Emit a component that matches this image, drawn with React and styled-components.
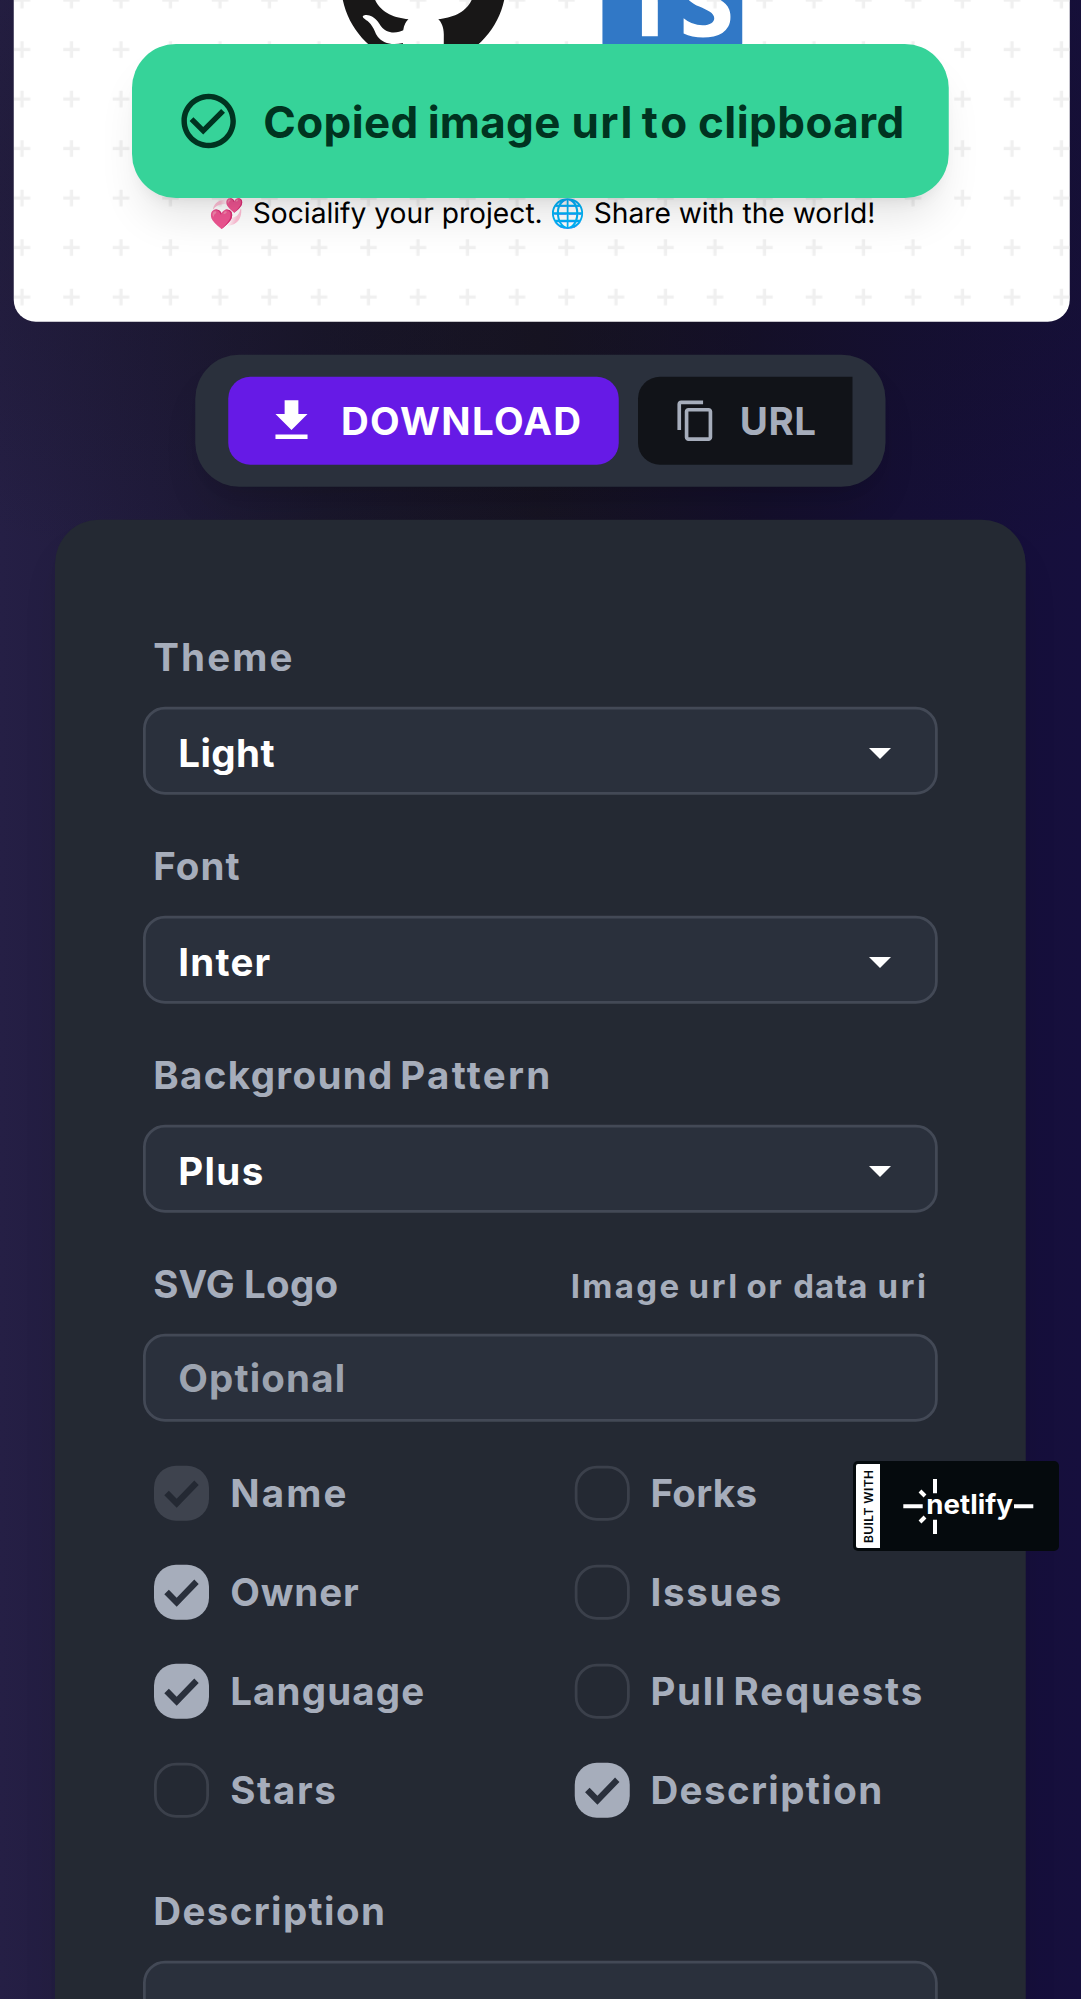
import React from 'react';
import styled, { createGlobalStyle } from 'styled-components';
import { SiGithub, SiTypescript } from 'react-icons/si';
import { MdDownload, MdContentCopy, MdCheckCircleOutline } from 'react-icons/md';

const GlobalStyle = createGlobalStyle`
  *, *::before, *::after { box-sizing: border-box; }
  html, body { margin: 0; padding: 0; }
  body {
    overflow: hidden;
    background: #17132a;
    font-family: Inter, 'Liberation Sans', sans-serif;
    color: #a6adbb;
  }
`;

const shadow = '0 10px 15px -3px rgba(0, 0, 0, 0.1), 0 4px 6px -4px rgba(0, 0, 0, 0.1)';

const Page = styled.div`
  position: relative;
  width: 1081px;
  height: 1999px;
  overflow: hidden;
  background:
    radial-gradient(ellipse 900px 420px at 540px 200px, rgba(20, 17, 28, 0.5), rgba(20, 17, 28, 0)),
    linear-gradient(90deg, #251f45 0%, #201b3c 14%, #1a172e 30%, #171424 50%, #140f2d 70%, #150f37 84%, #160f3d 100%);
`;

/* Phone-sized layout, enlarged to the pixel density of the device. */
const Screen = styled.main`
  display: flex;
  flex-direction: column;
  align-items: center;
  width: 393px;
  height: 727px;
  transform: scale(2.75);
  transform-origin: 0 0;
`;

const Preview = styled.section`
  position: relative;
  display: flex;
  flex: none;
  flex-direction: column;
  align-items: center;
  width: 384px;
  height: 192px;
  margin: -75px 0 12px 1px;
  padding-top: 37.6px;
  border-radius: 8px;
  overflow: hidden;
  background: #fff;
`;

const PatternLayer = styled.svg`
  position: absolute;
  inset: 0;
  width: 100%;
  height: 100%;
`;

const Logos = styled.div`
  position: relative;
  display: flex;
  align-items: center;
  gap: 34.7px;
  height: 60px;
  margin-left: 0.6px;
`;

const Caption = styled.p`
  position: relative;
  margin: 49.9px 0 0 0.6px;
  font-size: 10.25px;
  line-height: 13px;
  color: #000;
  white-space: nowrap;
  text-rendering: geometricPrecision;
`;

const Word = styled.span`
  margin-left: ${(p) => p.$shift}px;
  letter-spacing: ${(p) => p.$track}px;
`;

const Toast = styled.div`
  position: absolute;
  top: 16px;
  left: 48px;
  display: flex;
  align-items: center;
  gap: 8px;
  width: 297px;
  height: 56px;
  padding: 0 16px;
  border-radius: 16px;
  background: #36d399;
  color: #003320;
  font-size: 16px;
  font-weight: 700;
  white-space: nowrap;
  box-shadow: ${shadow};
`;

const Actions = styled.div`
  display: flex;
  flex: none;
  gap: 7px;
  width: 251px;
  height: 48px;
  margin-bottom: 12px;
  padding: 8px 12px;
  border-radius: 16px;
  background: #2a303c;
  box-shadow: ${shadow};
`;

const ActionButton = styled.button`
  display: flex;
  align-items: center;
  gap: 8px;
  width: ${(p) => p.$width}px;
  height: 32px;
  padding: 0 0 0 13px;
  border: 0;
  border-radius: ${(p) => (p.$joined ? '8px 0 0 8px' : '8px')};
  background: ${(p) => (p.$primary ? '#661ae6' : '#111318')};
  color: ${(p) => (p.$primary ? '#fff' : '#a6adbb')};
  font: 700 14px/1 Inter, 'Liberation Sans', sans-serif;
  white-space: nowrap;
`;

const Panel = styled.form`
  display: flex;
  flex: none;
  flex-direction: column;
  gap: 8px;
  width: 353px;
  height: 600px;
  padding: 32px 32px 0;
  border-radius: 16px;
  background: #242933;
  box-shadow: ${shadow};
`;

const Field = styled.div`
  display: flex;
  flex-direction: column;
`;

const LabelRow = styled.div`
  display: flex;
  align-items: center;
  justify-content: space-between;
  height: 36px;
  padding: 0 4px;
`;

const Label = styled.label`
  margin-left: -0.3px;
  font-size: 14px;
  font-weight: 700;
  line-height: 20px;
  white-space: nowrap;
`;

const Hint = styled.span`
  margin-right: -0.7px;
  padding-top: 1px;
  font-size: 12px;
  font-weight: 700;
  line-height: 16px;
  white-space: nowrap;
`;

const Control = styled.div`
  display: flex;
  align-items: center;
  justify-content: space-between;
  flex: none;
  height: ${(p) => (p.$tall ? 96 : 32)}px;
  padding: ${(p) => (p.$select ? '2.4px 16px 0 11.8px' : '0 11.8px')};
  border: 1px solid #434956;
  border-radius: 8px;
  background: #2a303c;
  color: ${(p) => (p.$muted ? '#9ca3af' : '#fff')};
  font-size: 14px;
  font-weight: 700;
  line-height: 20px;
`;

const Checks = styled.div`
  display: grid;
  grid-template-columns: 1fr 1fr;
  grid-auto-rows: 36px;
  column-gap: 16px;
`;

const Check = styled.label`
  display: flex;
  align-items: center;
  gap: 7.7px;
  min-width: 0;
  padding-left: 4px;
  font-size: 14px;
  font-weight: 700;
  line-height: 20px;
  white-space: nowrap;

  &:nth-child(even) {
    gap: 8px;
  }
`;

const Box = styled.span`
  display: flex;
  flex: none;
  width: 20px;
  height: 20px;
  border: ${(p) => (p.$on ? '0' : '1px solid #3b404b')};
  border-radius: 8px;
  background: ${(p) => (p.$disabled ? '#3e434e' : p.$on ? '#a6adbb' : 'transparent')};
  color: ${(p) => (p.$disabled ? '#242933' : '#2a303c')};
`;

const Badge = styled.aside`
  position: absolute;
  top: 1461px;
  left: 853px;
  width: 206px;
  height: 90px;
`;

/* Tracking per word: [letter spacing, shift before the word]. */
const tracking = {
  'Copied image url to clipboard': [[0.13, 0], [0.1, -0.5], [0.55, 0.1], [1, -0.9], [0.16, -0.9]],
  DOWNLOAD: [[0.47, 0]],
  URL: [[0.2, 0]],
  Theme: [[0.78, 0]],
  Font: [[0.4, 0]],
  'Background Pattern': [[0.5, 0], [0.85, -1.0]],
  'SVG Logo': [[0.05, 0], [0.1, 0]],
  'Image url or data uri': [[0.85, 0], [0.95, -0.3], [0.5, -0.4], [0.34, 0.9], [0.95, 0.5]],
  Light: [[0.16, 0]],
  Inter: [[0.45, 0]],
  Plus: [[0.5, 0]],
  Optional: [[0.42, 0]],
  Name: [[0.8, 0]],
  Forks: [[0.13, 0]],
  Owner: [[0.33, 0]],
  Issues: [[0.62, 0]],
  Language: [[0.42, 0]],
  'Pull Requests': [[0.62, 0], [0.67, -0.95]],
  Stars: [[0.6, 0]],
  Description: [[0.51, 0]],
};

function Tracked({ text }) {
  const words = text.split(' ');
  return (
    <span>
      {words.map((word, i) => {
        const [track, shift] = tracking[text][i];
        return (
          <React.Fragment key={word}>
            {i > 0 && ' '}
            <Word $track={track} $shift={shift}>
              {word}
            </Word>
          </React.Fragment>
        );
      })}
    </span>
  );
}

function Caret() {
  return (
    <svg width="8" height="4" viewBox="0 0 8 4">
      <path d="M0 0H8L4 4Z" fill="#fff" />
    </svg>
  );
}

function Tick() {
  return (
    <svg width="20" height="20" viewBox="0 0 20 20">
      <path d="M3.75 10.75L5.4 9.1L8.25 12L14.65 5.4L16.25 7L8.25 15.25Z" fill="currentColor" />
    </svg>
  );
}

function PlusPattern() {
  return (
    <PatternLayer viewBox="0 0 384 192">
      <defs>
        <pattern id="plus" width="18" height="18" patternUnits="userSpaceOnUse">
          <path d="M2.4 0h1.2v2.4H6v1.2H3.6V6H2.4V3.6H0V2.4h2.4z" fill="#f0f0f0" />
        </pattern>
      </defs>
      <rect width="384" height="192" fill="url(#plus)" />
    </PatternLayer>
  );
}

function NetlifyBadge() {
  return (
    <Badge>
      <svg width="206" height="90" viewBox="0 0 206 90">
        <rect width="206" height="90" rx="5" fill="#050a0d" />
        <path d="M5 3H27V87H5a2 2 0 0 1-2-2V5a2 2 0 0 1 2-2Z" fill="#fff" />
        <text
          transform="translate(19.7 82) rotate(-90)"
          fontFamily="Inter, sans-serif"
          fontSize="12"
          fontWeight="600"
          textLength="73"
          fill="#050a0d"
        >
          BUILT WITH
        </text>
        <g stroke="#fff" strokeWidth="4">
          <path d="M50.3 45.2H69.7M161 45.2H180.3M82 18V32.3M82 58.7V73" />
          <path d="M67 30L72 35M67 61L72 56" />
        </g>
        <text
          x="73.3"
          y="52.6"
          fontFamily="Inter, sans-serif"
          fontSize="27"
          fontWeight="700"
          textLength="86.5"
          lengthAdjust="spacingAndGlyphs"
          fill="#fff"
        >
          netlify
        </text>
      </svg>
    </Badge>
  );
}

const selects = [
  ['Theme', 'Light'],
  ['Font', 'Inter'],
  ['Background Pattern', 'Plus'],
];

const checks = [
  { name: 'Name', on: true, disabled: true },
  { name: 'Forks' },
  { name: 'Owner', on: true },
  { name: 'Issues' },
  { name: 'Language', on: true },
  { name: 'Pull Requests' },
  { name: 'Stars' },
  { name: 'Description', on: true },
];

export default function App() {
  return (
    <Page>
      <GlobalStyle />
      <Screen>
        <Preview>
          <PlusPattern />
          <Logos>
            <SiGithub size={60} color="#181717" />
            <SiTypescript size={51} color="#3178c6" />
          </Logos>
          <Caption>💞 Socialify your project. 🌐 Share with the world!</Caption>
        </Preview>
        <Actions>
          <ActionButton $primary $width={142} type="button">
            <MdDownload size={20} />
            <Tracked text="DOWNLOAD" />
          </ActionButton>
          <ActionButton $joined $width={78} type="button">
            <MdContentCopy size={16} />
            <Tracked text="URL" />
          </ActionButton>
        </Actions>
        <Panel>
          {selects.map(([label, value]) => (
            <Field key={label}>
              <LabelRow>
                <Label>
                  <Tracked text={label} />
                </Label>
              </LabelRow>
              <Control $select>
                <Tracked text={value} />
                <Caret />
              </Control>
            </Field>
          ))}
          <Field>
            <LabelRow>
              <Label>
                <Tracked text="SVG Logo" />
              </Label>
              <Hint>
                <Tracked text="Image url or data uri" />
              </Hint>
            </LabelRow>
            <Control $muted>
              <Tracked text="Optional" />
            </Control>
          </Field>
          <Checks>
            {checks.map((c) => (
              <Check key={c.name}>
                <Box $on={c.on} $disabled={c.disabled}>
                  {c.on && <Tick />}
                </Box>
                <Tracked text={c.name} />
              </Check>
            ))}
          </Checks>
          <Field>
            <LabelRow>
              <Label>
                <Tracked text="Description" />
              </Label>
            </LabelRow>
            <Control $tall />
          </Field>
        </Panel>
        <Toast>
          <MdCheckCircleOutline size={24} />
          <Tracked text="Copied image url to clipboard" />
        </Toast>
      </Screen>
      <NetlifyBadge />
    </Page>
  );
}
